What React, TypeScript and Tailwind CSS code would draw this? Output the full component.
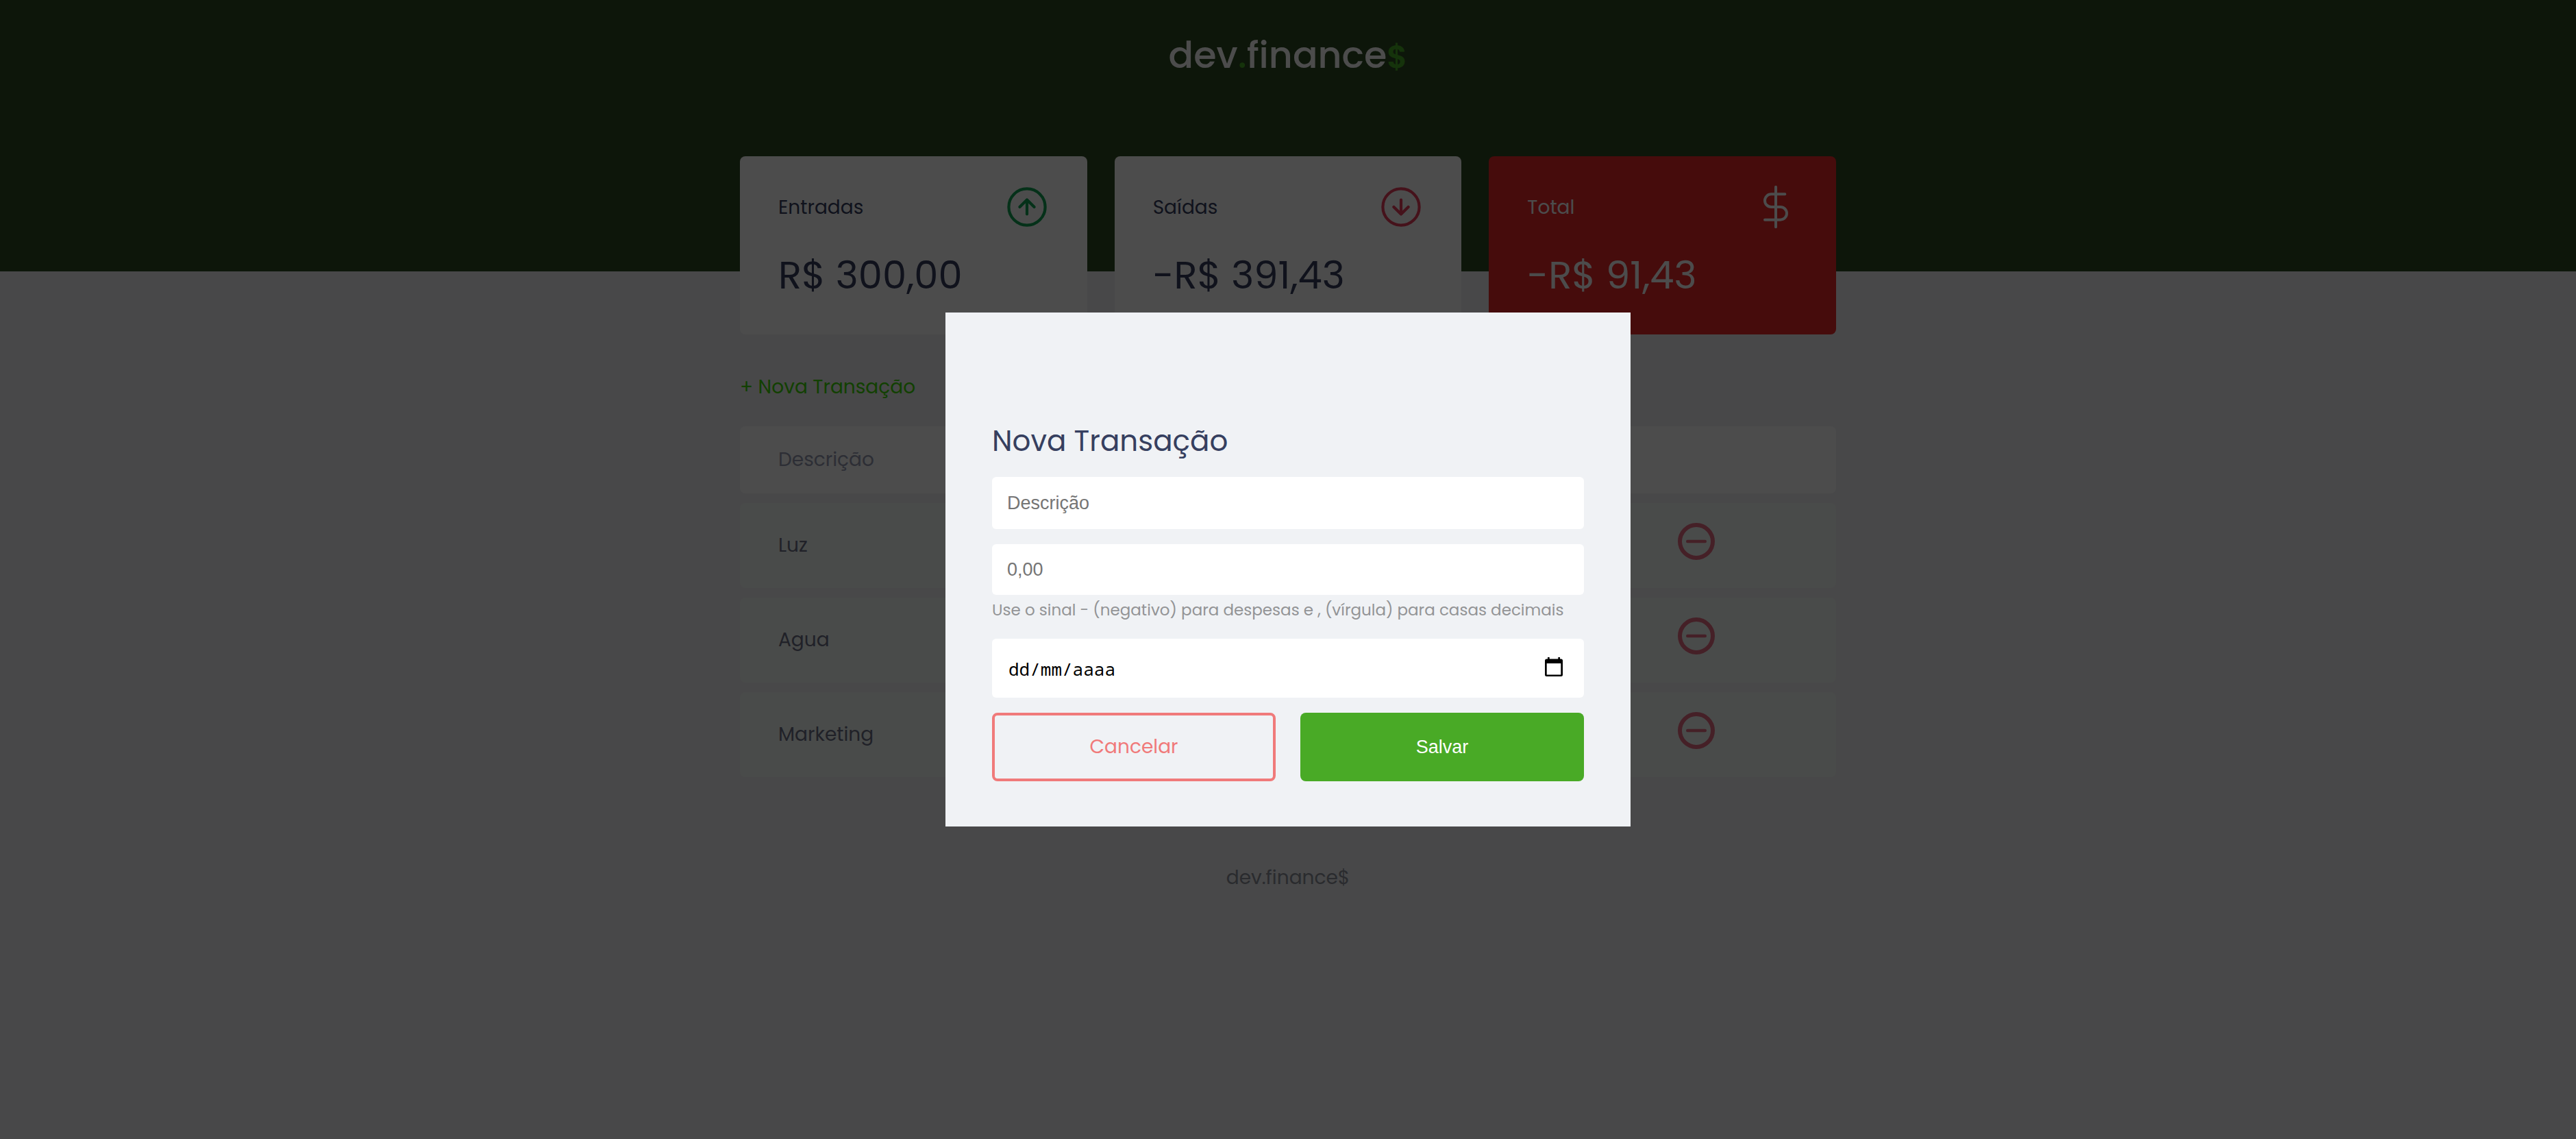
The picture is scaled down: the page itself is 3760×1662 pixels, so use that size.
import React from "react";

const POPPINS = "font-['Poppins','Inter',sans-serif]";
const ARIAL = "font-['Liberation_Sans',Arial,sans-serif]";

function ArrowIcon({ down = false, className }: { down?: boolean; className: string }) {
  return (
    <svg viewBox="0 0 64 64" className={className} fill="none" stroke="currentColor" strokeWidth="4.2" strokeLinecap="round" strokeLinejoin="round" aria-hidden="true">
      <circle cx="32" cy="32" r="26.6" />
      {down ? <path d="M32 21.500v21M21.400 32 32 42.600l10.600-10.600" /> : <path d="M32 42.500v-21M21.400 32 32 21.400l10.600 10.600" />}
    </svg>
  );
}

function DollarIcon() {
  return (
    <svg viewBox="0 0 24 24" className="size-16" fill="none" stroke="currentColor" strokeWidth="1.5" strokeLinecap="round" strokeLinejoin="round" aria-hidden="true">
      <path d="M12 1v22M17 5H9.5a3.5 3.5 0 0 0 0 7h5a3.5 3.5 0 0 1 0 7H6" />
    </svg>
  );
}

function MinusIcon() {
  return (
    <svg viewBox="0 0 54 54" className="size-[54px]" fill="none" stroke="currentColor" strokeLinecap="round" aria-hidden="true">
      <circle cx="27" cy="27" r="24" strokeWidth="6" />
      <path d="M14.2 27h25.6" strokeWidth="4.4" />
    </svg>
  );
}

function CalendarIcon() {
  return (
    <svg viewBox="0 0 26 28" className="h-7 w-[26px]" aria-hidden="true">
      <path fill="#000" fillRule="evenodd" d="M4 0h2.700v2.400h12.600V0H22v2.400h1.500A2.500 2.500 0 0 1 26 4.900v20.600a2.500 2.500 0 0 1-2.500 2.500h-21A2.500 2.500 0 0 1 0 25.500V4.900a2.500 2.500 0 0 1 2.500-2.500H4zM2.700 9v16.400h20.600V9z" />
    </svg>
  );
}

function Card({ title, value, icon, total = false }: { title: string; value: string; icon: React.ReactNode; total?: boolean }) {
  return (
    <div className={total ? "rounded-lg bg-[#e92929] px-14 pt-[42px] pb-10 text-white" : "rounded-lg bg-white px-14 pt-[42px] pb-10 text-[#363f5f]"}>
      <h3 className="flex h-16 items-center justify-between text-[28px]">
        <span className="pt-0.5">{title}</span>
        {icon}
      </h3>
      <p className="mt-[22px] text-[56px] leading-[92px]">{value}</p>
    </div>
  );
}

const transactions = ["Luz", "Agua", "Marketing"];

export default function App() {
  return (
    <div className={`min-h-screen bg-[#f0f2f5] ${POPPINS}`}>
      <header className="h-[396px] bg-[#2d4a22] pt-[46px] text-center">
        <h1 className="text-[54px] leading-[68px] font-medium text-white">
          dev<span className="text-[#49aa26]">.</span>finance<span className="text-[46px] font-semibold text-[#49aa26]">$</span>
        </h1>
      </header>

      <main className="mx-auto w-full max-w-[1600px]">
        <section className="relative -mt-[168px] grid grid-cols-3 gap-10">
          <Card title="Entradas" value="R$ 300,00" icon={<ArrowIcon className="size-16 text-[#12a454]" />} />
          <Card title="Saídas" value="-R$ 391,43" icon={<ArrowIcon down className="size-16 text-[#e83f5b]" />} />
          <Card title="Total" value="-R$ 91,43" icon={<DollarIcon />} total />
        </section>

        <section className="mt-14">
          <a href="#nova" className="block w-fit text-[28px] leading-[42px] text-[#3dd705]">+ Nova Transação</a>
          <table className="mt-[22px] w-full border-separate border-spacing-x-0 border-spacing-y-[14px]">
            <thead>
              <tr className="h-[98px] bg-white text-left text-[28px] text-[#969cb3]">
                <th className="rounded-l-lg px-14 font-normal">Descrição</th>
                <th className="w-[360px] rounded-r-lg" aria-label="Ações" />
              </tr>
            </thead>
            <tbody>
              {transactions.map((name) => (
                <tr key={name} className="h-[124px] bg-[#f6faf7] text-[28px] text-[#6b7085]">
                  <td className="rounded-l-lg px-14">{name}</td>
                  <td className="w-[360px] rounded-r-lg pb-3 pl-[129px]">
                    <button type="button" aria-label={`Remover ${name}`} className="block text-[#e66b82]">
                      <MinusIcon />
                    </button>
                  </td>
                </tr>
              ))}
            </tbody>
          </table>
        </section>
      </main>

      <footer className="mt-[112px] text-center text-[28px] leading-[42px] text-[#8c8f9a]">dev.finance$</footer>

      <div className="fixed inset-0 flex items-center justify-center bg-black/70">
        <div role="dialog" aria-labelledby="modal-title" className="w-full max-w-[1000px] bg-[#f0f2f5] px-[68px] pt-40 pb-[66px]">
          <h2 id="modal-title" className="text-[42px] leading-[56px] text-[#363f5f]">Nova Transação</h2>
          <form className="mt-6">
            <input aria-label="Descrição" placeholder="Descrição" className={`block h-[76px] w-full rounded-md bg-white px-[22px] text-[27px] placeholder:text-[#757575] ${ARIAL}`} />
            <input aria-label="Valor" placeholder="0,00" className={`mt-[22px] block h-[74px] w-full rounded-md bg-white px-[22px] text-[27px] placeholder:text-[#757575] ${ARIAL}`} />
            <small className="mt-1.5 block text-[23px] leading-8 text-[#939496]">Use o sinal - (negativo) para despesas e , (vírgula) para casas decimais</small>
            <div className="mt-[26px] flex h-[86px] items-center rounded-md bg-white pr-[31px] pl-6">
              <input aria-label="Data" placeholder="dd/mm/aaaa" className="min-w-0 flex-1 pt-0.5 font-['Noto_Sans_Mono','DejaVu_Sans_Mono',monospace] text-[26px] placeholder:text-black" />
              <button type="button" aria-label="Abrir calendário" className="pb-1"><CalendarIcon /></button>
            </div>
            <div className="mt-[22px] grid grid-cols-2 gap-9">
              <a href="#cancelar" className="flex h-[100px] items-center justify-center rounded-lg border-4 border-[#f07a7a] text-[28px] text-[#f07a7a]">Cancelar</a>
              <button type="button" className={`h-[100px] rounded-lg bg-[#49aa26] text-[27px] text-white ${ARIAL}`}>Salvar</button>
            </div>
          </form>
        </div>
      </div>
    </div>
  );
}
